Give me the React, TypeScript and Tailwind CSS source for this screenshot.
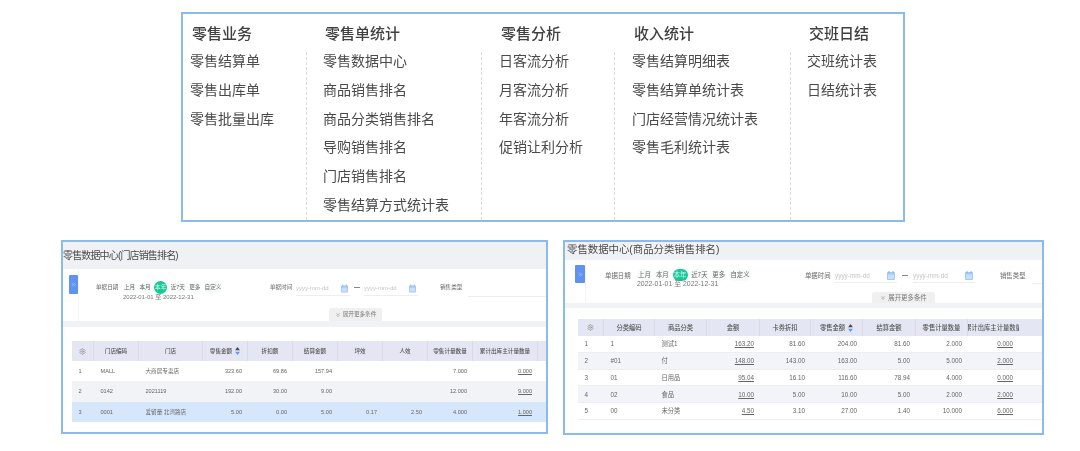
import { ChevronsDown, ChevronsRight, Settings } from 'lucide-react'

const MENU = [
  {
    title: '零售业务',
    width: 'w-[123px]',
    head: 'pl-[9px]',
    body: 'pl-[7px]',
    items: ['零售结算单', '零售出库单', '零售批量出库'],
  },
  {
    title: '零售单统计',
    width: 'w-[175px]',
    head: 'pl-[19px]',
    body: 'pl-[16px] border-l border-dashed border-[#dcdcdc]',
    items: ['零售数据中心', '商品销售排名', '商品分类销售排名', '导购销售排名', '门店销售排名', '零售结算方式统计表'],
  },
  {
    title: '零售分析',
    width: 'w-[133px]',
    head: 'pl-[20px]',
    body: 'pl-[17px] border-l border-dashed border-[#dcdcdc]',
    items: ['日客流分析', '月客流分析', '年客流分析', '促销让利分析'],
  },
  {
    title: '收入统计',
    width: 'w-[176px]',
    head: 'pl-[20px]',
    body: 'pl-[17px] border-l border-dashed border-[#dcdcdc]',
    items: ['零售结算明细表', '零售结算单统计表', '门店经营情况统计表', '零售毛利统计表'],
  },
  {
    title: '交班日结',
    width: 'w-[113px]',
    head: 'pl-[19px]',
    body: 'pl-[16px] border-l border-dashed border-[#dcdcdc]',
    items: ['交班统计表', '日结统计表'],
  },
]

const STORE_COLS = 'grid-cols-[22px_45px_64px_45px_45px_45px_45px_45px_45px_65px_9px]'
const CATEGORY_COLS = 'grid-cols-[26px_51px_52px_53px_51px_52px_53px_52px_51px]'

const STORE_HEAD = ['', '门店编码', '门店', '零售金额', '折扣额', '结算金额', '坪效', '人效', '零售计量数量', '累计出库主计量数量', '']
const STORE_ROWS = [
  ['1', 'MALL', '大商居专卖店', '323.60', '69.86', '157.94', '', '', '7.000', '0.000', ''],
  ['2', '0142', '2021119', '192.00', '30.00', '9.00', '', '', '12.000', '9.000', ''],
  ['3', '0001', '爱留量 北湾路店', '5.00', '0.00', '5.00', '0.17', '2.50', '4.000', '1.000', ''],
]

const CATEGORY_HEAD = ['', '分类编码', '商品分类', '金额', '卡券折扣', '零售金额', '结算金额', '零售计量数量', '累计出库主计量数量']
const CATEGORY_ROWS = [
  ['1', '1', '测试1', '163.20', '81.60', '204.00', '81.60', '2.000', '0.000'],
  ['2', '#01', '付', '148.00', '143.00', '163.00', '5.00', '5.000', '2.000'],
  ['3', '01', '日用品', '95.04', '16.10', '116.60', '78.94', '4.000', '0.000'],
  ['4', '02', '食品', '10.00', '5.00', '10.00', '5.00', '2.000', '2.000'],
  ['5', '00', '未分类', '4.50', '3.10', '27.00', '1.40', '10.000', '6.000'],
]

const STORE_BAR = {
  root: 'h-[52px] text-[5.6px]',
  button: 'ml-[6px] mt-[6px] h-[19px] w-[9px]',
  row: 'pl-[17px] pt-[12px]',
  label: 'w-[27px]',
  chips: 'gap-[2.6px]',
  chipSizes: ['w-[13px]', 'w-[13px]', 'w-[13px]', 'w-[16px]', 'w-[13px]', 'w-[18px]'],
  chipHeight: 'h-[13px]',
  range: 'text-[6px] -mt-[1px]',
  timeLabel: 'ml-[48px] w-[26px]',
  input: 'w-[54px] h-[15px] text-[6px]',
  dash: 'w-[14px]',
  typeLabel: 'ml-[22px] w-[28px]',
  typeInput: 'flex-1 h-[16px]',
  more: 'ml-[250px] h-[13px] w-[53px]',
}

const CATEGORY_BAR = {
  root: 'h-[43px] text-[6.4px]',
  button: 'ml-[10px] mt-[5px] h-[18px] w-[10px]',
  row: 'pl-[19px] pt-[9px]',
  label: 'w-[32px]',
  chips: 'gap-[2.8px]',
  chipSizes: ['w-[15px]', 'w-[15px]', 'w-[15px]', 'w-[18px]', 'w-[15px]', 'w-[22px]'],
  chipHeight: 'h-[12px]',
  range: 'text-[6.9px] -mt-[2px]',
  timeLabel: 'ml-[54px] w-[30px]',
  input: 'w-[62px] h-[14px] text-[6.4px]',
  dash: 'w-[16px]',
  typeLabel: 'ml-[25px] w-[32px]',
  typeInput: 'flex-1 h-[15px]',
  more: 'ml-[286px] h-[11px] w-[63px]',
}

function CalendarIcon({ className }: { className: string }) {
  return (
    <svg viewBox="0 0 8 9" className={className}>
      <rect x="0" y="1" width="8" height="8" rx="1" fill="#a5c8f4" />
      <rect x="1.5" y="0" width="1" height="2" fill="#7fb0ee" />
      <rect x="5.5" y="0" width="1" height="2" fill="#7fb0ee" />
      <rect x="1" y="3.5" width="6" height="4.5" fill="#c9def8" />
    </svg>
  )
}

function SortIcon() {
  return (
    <svg viewBox="0 0 6 10" className="ml-[3px] h-[8px] w-[5px]">
      <path d="M3 0 L6 4 H0 Z" fill="#444a5a" />
      <path d="M3 10 L0 6 H6 Z" fill="#5b9bec" />
    </svg>
  )
}

function DateInput({ className, iconClass }: { className: string; iconClass: string }) {
  return (
    <div className={`flex items-center justify-between border-b border-[#eeeeee] pr-[2px] text-[#c4c4c4] ${className}`}>
      <span>yyyy-mm-dd</span>
      <CalendarIcon className={iconClass} />
    </div>
  )
}

function FilterBar({ s, iconClass }: { s: typeof STORE_BAR; iconClass: string }) {
  const chips = ['上月', '本月', '本年', '近7天', '更多', '自定义']
  return (
    <div className={`flex bg-white text-[#666666] ${s.root}`}>
      <div className={`flex shrink-0 items-center justify-center rounded-[1px] bg-[#5f93ef] text-[#a9c8f8] ${s.button}`}>
        <ChevronsRight className="h-[7px] w-[7px]" strokeWidth={2.5} />
      </div>
      <div className="flex min-w-0 flex-1 flex-col justify-between border-l border-[#f4f4f4]">
        <div className={`flex items-start ${s.row}`}>
          <div className={`shrink-0 leading-[13px] ${s.label}`}>单据日期</div>
          <div className="shrink-0">
            <div className={`flex ${s.chips}`}>
              {chips.map((chip, i) => (
                <span
                  key={chip}
                  className={`flex items-center justify-center rounded-full ${s.chipSizes[i]} ${s.chipHeight} ${
                    chip === '本年' ? 'bg-[#14c99a] text-[#d8f7ee]' : 'bg-[#f6fbf9]'
                  }`}
                >
                  {chip}
                </span>
              ))}
            </div>
            <div className={`whitespace-nowrap text-[#777777] ${s.range}`}>2022-01-01 至 2022-12-31</div>
          </div>
          <div className={`shrink-0 leading-[13px] ${s.timeLabel}`}>单据时间</div>
          <DateInput className={`shrink-0 ${s.input}`} iconClass={iconClass} />
          <div className={`flex shrink-0 justify-center pt-[6px] ${s.dash}`}>
            <div className="h-px w-[6px] bg-[#888888]" />
          </div>
          <DateInput className={`shrink-0 ${s.input}`} iconClass={iconClass} />
          <div className={`shrink-0 leading-[13px] ${s.typeLabel}`}>销售类型</div>
          <div className={`border-b border-[#eeeeee] ${s.typeInput}`} />
        </div>
        <div
          className={`flex items-center justify-center gap-[2px] rounded-t-[2px] bg-[#f0f0f0] text-[#777777] ${s.more}`}
        >
          <ChevronsDown className="h-[6px] w-[6px]" />
          展开更多条件
        </div>
      </div>
    </div>
  )
}

function DataTable({
  cols,
  head,
  rows,
  numericFrom,
  linkCols,
  rowClass,
  rowHeight,
  headHeight,
  textSize,
}: {
  cols: string
  head: string[]
  rows: string[][]
  numericFrom: number
  linkCols: number[]
  rowClass: (i: number) => string
  rowHeight: string
  headHeight: string
  textSize: string
}) {
  return (
    <div className={`text-[#666666] ${textSize}`}>
      <div className={`grid bg-[#e4e7f3] font-medium text-[#555555] ${cols} ${headHeight}`}>
        {head.map((title, i) => (
          <div
            key={i}
            className="flex items-center justify-center overflow-hidden whitespace-nowrap border-r border-[#d8dce9] last:border-r-0"
          >
            {i === 0 ? <Settings className="h-[7px] w-[7px] shrink-0 text-[#888888]" /> : title}
            {title === '零售金额' && <SortIcon />}
          </div>
        ))}
      </div>
      {rows.map((row, r) => (
        <div key={r} className={`grid ${cols} ${rowHeight} ${rowClass(r)}`}>
          {row.map((cell, i) => (
            <div
              key={i}
              className={`flex items-center whitespace-nowrap ${
                i < numericFrom ? 'justify-start pl-[6.5px]' : 'justify-end pr-[6px]'
              }`}
            >
              <span className={linkCols.includes(i) ? 'underline' : ''}>{cell}</span>
            </div>
          ))}
        </div>
      ))}
    </div>
  )
}

export default function App() {
  return (
    <div className="h-[451px] w-[1080px] overflow-hidden bg-white pt-[12px] font-['Liberation_Sans','Noto_Sans_CJK_SC',sans-serif] blur-[0.55px]">
      <div className="ml-[181px] flex h-[210px] w-[724px] border-2 border-[#8dbbe8] text-[14px] text-[#4a4a4a]">
        {MENU.map((col) => (
          <div key={col.title} className={`flex flex-col ${col.width}`}>
            <div className={`flex h-[38px] shrink-0 items-center text-[15px] font-medium leading-none text-[#404040] ${col.head}`}>
              {col.title}
            </div>
            <div className={`flex flex-1 flex-col gap-[10.8px] ${col.body}`}>
              {col.items.map((item) => (
                <div key={item} className="h-[18px] whitespace-nowrap leading-[18px]">
                  {item}
                </div>
              ))}
            </div>
          </div>
        ))}
      </div>

      <div className="mt-[18px] flex items-start pl-[61px]">
        <div className="h-[194px] w-[487px] overflow-hidden border-2 border-[#8dbbe8]">
          <div className="flex h-[27px] items-center whitespace-nowrap bg-[#f0f1f5] pb-[1px] text-[10px] tracking-[-0.85px] text-[#4a4a4a]">
            零售数据中心(门店销售排名)
          </div>
          <FilterBar s={STORE_BAR} iconClass="h-[9px] w-[7px]" />
          <div className="h-[6px] bg-[#f1f2f4]" />
          <div className="pl-[9px] pt-[14px]">
            <DataTable
              cols={STORE_COLS}
              head={STORE_HEAD}
              rows={STORE_ROWS}
              numericFrom={3}
              linkCols={[9]}
              rowClass={(i) => ['bg-white', 'bg-[#f2f3f7]', 'bg-[#d6e7fb]'][i]}
              rowHeight="h-[20.4px]"
              headHeight="h-[20px]"
              textSize="text-[5.6px]"
            />
          </div>
        </div>

        <div className="ml-[15px] h-[195px] w-[481px] overflow-hidden border-2 border-[#8dbbe8]">
          <div className="flex h-[18px] items-center whitespace-nowrap bg-[#f0f1f5] pb-[3px] pl-[2px] text-[10.4px] text-[#4a4a4a]">
            零售数据中心(商品分类销售排名)
          </div>
          <FilterBar s={CATEGORY_BAR} iconClass="h-[9px] w-[8px]" />
          <div className="h-[5px] bg-[#f1f2f4]" />
          <div className="pl-[13px] pt-[11px]">
            <DataTable
              cols={CATEGORY_COLS}
              head={CATEGORY_HEAD}
              rows={CATEGORY_ROWS}
              numericFrom={3}
              linkCols={[3, 8]}
              rowClass={(i) => `border-b border-[#eeeeee] ${i % 2 ? 'bg-[#f3f4fa]' : 'bg-white'}`}
              rowHeight="h-[16.8px]"
              headHeight="h-[17px]"
              textSize="text-[6.3px]"
            />
          </div>
        </div>
      </div>
    </div>
  )
}
